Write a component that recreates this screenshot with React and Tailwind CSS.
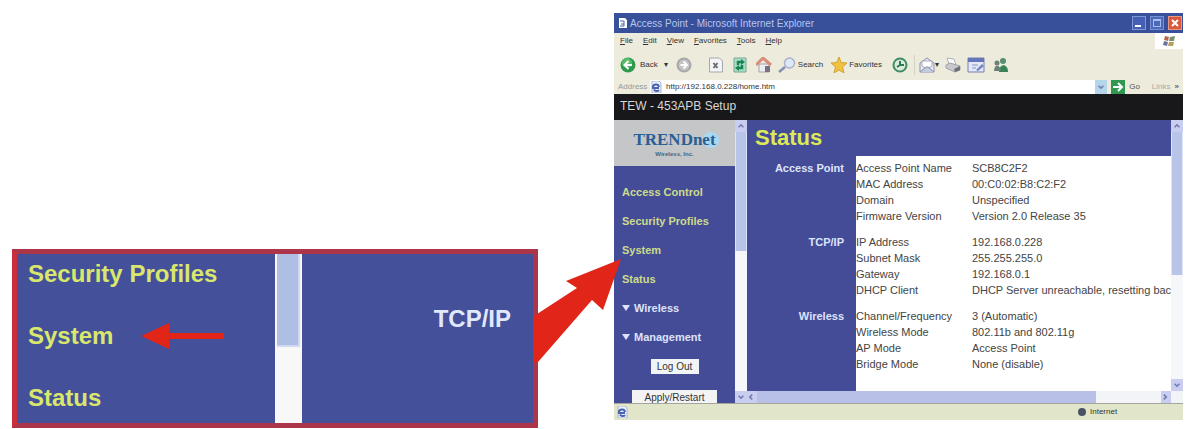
import React from "react";

const sidebarLinks = ["Access Control", "Security Profiles", "System", "Status"];

const statusGroups = [
  {
    title: "Access Point",
    rows: [
      ["Access Point Name", "SCB8C2F2"],
      ["MAC Address", "00:C0:02:B8:C2:F2"],
      ["Domain", "Unspecified"],
      ["Firmware Version", "Version 2.0 Release 35"],
    ],
  },
  {
    title: "TCP/IP",
    rows: [
      ["IP Address", "192.168.0.228"],
      ["Subnet Mask", "255.255.255.0"],
      ["Gateway", "192.168.0.1"],
      ["DHCP Client", "DHCP Server unreachable, resetting bac"],
    ],
  },
  {
    title: "Wireless",
    rows: [
      ["Channel/Frequency", "3 (Automatic)"],
      ["Wireless Mode", "802.11b and 802.11g"],
      ["AP Mode", "Access Point"],
      ["Bridge Mode", "None (disable)"],
    ],
  },
];

const Chevron = ({ className = "" }) => (
  <svg viewBox="0 0 10 10" className={`h-2 w-2 shrink-0 ${className}`} fill="none" stroke="#6f7bb0" strokeWidth="2">
    <path d="M2 6.5 5 3.5 8 6.5" />
  </svg>
);

const BackIcon = () => (
  <svg viewBox="0 0 16 16" className="h-4 w-4 shrink-0">
    <circle cx="8" cy="8" r="7.5" fill="#2f9a4c" />
    <circle cx="7" cy="6" r="5" fill="#59bb6c" />
    <path d="M8.5 4 4.5 8l4 4M5 8h7" fill="none" stroke="#fff" strokeWidth="2" />
  </svg>
);

const ForwardIcon = () => (
  <svg viewBox="0 0 16 16" className="h-4 w-4 shrink-0">
    <circle cx="8" cy="8" r="6.5" fill="#c4c4c4" stroke="#a8a8aa" strokeWidth="2" />
    <path d="M7.5 4.5 11 8l-3.5 3.5M11 8H4.5" fill="none" stroke="#fff" strokeWidth="2" />
  </svg>
);

const StopIcon = () => (
  <svg viewBox="0 0 16 16" className="h-4 w-4 shrink-0">
    <path d="M1.5 1h10l3 3v11h-13z" fill="#f4f4f6" stroke="#a5a8b0" />
    <path d="m5.500 6 4 5M9.500 6l-4 5" stroke="#6c6d76" strokeWidth="2" />
  </svg>
);

const RefreshIcon = () => (
  <svg viewBox="0 0 16 16" className="h-4 w-4 shrink-0">
    <path d="M2 1h12v14H2z" fill="#a9dcc4" stroke="#72a999" />
    <path d="M11 5H6v3M5 11h5V8" fill="none" stroke="#178653" strokeWidth="2.5" />
    <path d="m9 2 4 3-4 3zM7 8l-4 3 4 3z" fill="#178653" />
  </svg>
);

const HomeIcon = () => (
  <svg viewBox="0 0 16 16" className="h-4 w-4 shrink-0">
    <path d="M3 7h10v8H3z" fill="#eeeef2" stroke="#a59fa9" />
    <path d="M0 8 7 1l8 7" fill="none" stroke="#d98d7d" strokeWidth="3" />
    <path d="M9 9h5v6H9z" fill="#777180" />
  </svg>
);

const SearchIcon = () => (
  <svg viewBox="0 0 18 16" className="h-4 w-[18px] shrink-0">
    <circle cx="11.5" cy="6" r="5" fill="#dfe9f6" stroke="#aab2cb" strokeWidth="1.5" />
    <path d="m7 10-6 5" stroke="#8390b5" strokeWidth="2.5" />
  </svg>
);

const StarIcon = () => (
  <svg viewBox="0 0 16 16" className="h-4 w-4 shrink-0">
    <path d="m8 0 2.200 5.500L16 6l-4.500 4L13 16l-5-3-5 3 1.500-6L0 6l5.800-.5z" fill="#f0c23e" stroke="#d1a235" />
  </svg>
);

const HistoryIcon = () => (
  <svg viewBox="0 0 16 16" className="h-4 w-4 shrink-0">
    <circle cx="8" cy="8" r="6.5" fill="#d8ebdc" stroke="#418d63" strokeWidth="2" />
    <path d="M8 4v4h4M8 8l-3 2" fill="none" stroke="#2d7950" strokeWidth="2" />
  </svg>
);

const MailIcon = () => (
  <svg viewBox="0 0 16 16" className="h-4 w-4 shrink-0">
    <path d="m1 6 7-5 7 5v9H1z" fill="#e9eaf1" stroke="#8b91ad" />
    <path d="M3 4h10v5l-5 3-5-3z" fill="#fff" stroke="#a5a9bd" />
    <path d="m1 15 6-5h2l6 5" fill="#c4cae0" stroke="#8b91ad" />
  </svg>
);

const PrintIcon = () => (
  <svg viewBox="0 0 16 16" className="h-4 w-4 shrink-0">
    <path d="m2 1 7 1 2 6-7-1z" fill="#fafafa" stroke="#b1b1bb" />
    <path d="m1 8 4-2 10 3v4l-5 2-9-4z" fill="#c8c9ce" stroke="#a0a1a8" />
    <path d="m9 12 6-3v4l-5 2z" fill="#6c6f76" />
  </svg>
);

const EditIcon = () => (
  <svg viewBox="0 0 18 16" className="h-4 w-[18px] shrink-0">
    <path d="M1 1h16v14H1z" fill="#e4e8f7" stroke="#7581b1" />
    <path d="M1 1h16v4H1z" fill="#6476b9" />
    <path d="M5 8h6M5 11h4" stroke="#8995c0" />
    <path d="m9 13 6-6 2 2-6 5z" fill="#7488c5" />
  </svg>
);

const MessengerIcon = () => (
  <svg viewBox="0 0 16 16" className="h-4 w-4 shrink-0">
    <circle cx="10" cy="4" r="3" fill="#568f6b" />
    <path d="M6 15c0-9 9-9 9 0z" fill="#388257" />
    <circle cx="4" cy="6" r="2.5" fill="#6b8178" />
    <path d="M1 14c0-7 6-7 7 0z" fill="#6b8178" />
  </svg>
);

const ExplorerIcon = () => (
  <svg viewBox="0 0 12 12" className="h-3 w-3 shrink-0">
    <path d="M2 0h7l2 2v10H2z" fill="#edf1fb" stroke="#a9b4d4" />
    <path d="M9 7H3a3 3 0 1 1 6-1M4 8.5c1 2 4 2 5 .5" fill="none" stroke="#4864b0" strokeWidth="2" />
  </svg>
);

const TitleBar = () => (
  <header className="flex h-5 items-center bg-[#384f99] pr-px pl-1 text-[#b4c6f0]">
    <svg viewBox="0 0 10 12" className="mr-0.5 h-3 w-2.5 shrink-0">
      <path d="M1 1h6l2 2v8H1z" fill="#fff" />
      <path d="M2 4h4v3H3m3 0v2H2" fill="none" stroke="#4864b0" />
    </svg>
    <h1 className="grow text-[10px] whitespace-nowrap">Access Point - Microsoft Internet Explorer</h1>
    <button aria-label="Minimize" className="mr-1 flex h-3.5 w-3.5 items-end border border-[#8097d6] bg-[#4360b4] p-0.5">
      <span className="h-0.5 w-1.5 bg-white" />
    </button>
    <button aria-label="Maximize" className="mr-1 h-3.5 w-3.5 border border-[#7690d2] bg-[#4a69bb] p-0.5">
      <span className="block h-full border border-t-2 border-[#a9bcea]" />
    </button>
    <button aria-label="Close" className="h-3.5 w-3.5 border border-[#e59a83] bg-[#d9583c]">
      <svg viewBox="0 0 12 12" stroke="#fff" strokeWidth="2">
        <path d="m3 3 6 6M9 3 3 9" />
      </svg>
    </button>
  </header>
);

const MenuBar = () => (
  <nav className="flex h-4 items-stretch text-[8px] text-[#333]">
    <div className="flex grow items-center gap-2.5 pl-1.5">
      {["File", "Edit", "View", "Favorites", "Tools", "Help"].map((item) => (
        <button key={item} className="first-letter:underline">
          {item}
        </button>
      ))}
    </div>
    <div className="flex w-7 items-center justify-center bg-white">
      <svg viewBox="0 0 14 12" className="h-3 w-3.5">
        <path d="m3 1 4 1-1 4-4-1z" fill="#b8674f" />
        <path d="m8 2 5-1-1 5-5 0z" fill="#76906b" />
        <path d="m2 6 4 1-1 4-4-1z" fill="#68769f" />
        <path d="m7 7 5 0-1 4-5 0z" fill="#b69d58" />
      </svg>
    </div>
  </nav>
);

const ToolBar = () => (
  <div className="flex h-[31px] items-center overflow-hidden pl-1.5 text-[8px] text-[#333]">
    <button className="flex items-center gap-1"><BackIcon />Back</button>
    <span className="mr-2 ml-1.5">▾</span>
    <button aria-label="Forward" className="mr-4"><ForwardIcon /></button>
    <div className="flex gap-2">
      <button aria-label="Stop"><StopIcon /></button>
      <button aria-label="Refresh"><RefreshIcon /></button>
      <button aria-label="Home"><HomeIcon /></button>
    </div>
    <button className="ml-1.5 flex items-center gap-0.5"><SearchIcon />Search</button>
    <button className="ml-2 flex items-center gap-0.5"><StarIcon />Favorites</button>
    <button aria-label="History" className="ml-2.5"><HistoryIcon /></button>
    <span className="mr-1 ml-1.5 h-5 w-px bg-[#d2d1c3]" />
    <div className="flex items-center gap-1.5">
      <button aria-label="Mail" className="flex items-center"><MailIcon />▾</button>
      <button aria-label="Print"><PrintIcon /></button>
      <button aria-label="Edit"><EditIcon /></button>
      <button aria-label="Messenger" className="ml-0.5"><MessengerIcon /></button>
    </div>
  </div>
);

const AddressBar = () => (
  <div className="flex h-3.5 items-center text-[8px]">
    <label htmlFor="address" className="w-9 pl-1 text-[#999]">Address</label>
    <div className="flex h-full grow items-center gap-1 bg-white">
      <ExplorerIcon />
      <input id="address" defaultValue="http://192.168.0.228/home.htm" className="w-full min-w-0 text-[#333]" />
    </div>
    <button aria-label="Show addresses" className="flex h-full w-3 items-center justify-center bg-[#b5d5ea]">
      <Chevron className="rotate-180" />
    </button>
    <button className="ml-1 flex items-center gap-1 text-[#555]">
      <svg viewBox="0 0 14 14" className="h-3.5 w-3.5">
        <path d="M0 0h14v14H0z" fill="#2e9850" />
        <path d="M2 7h9M7 3l4 4-4 4" fill="none" stroke="#fff" strokeWidth="2" />
      </svg>
      Go
    </button>
    <button className="ml-3 text-[#aaa]">Links</button>
    <span className="mx-1 text-[#333]">»</span>
  </div>
);

const Sidebar = () => (
  <aside className="flex w-[121px] shrink-0 flex-col overflow-hidden bg-[#454c97] text-[11px] font-bold">
    <div className="h-[46px] shrink-0 bg-[#c5c6c8] pt-2.5 text-center">
      <div className="relative mx-auto w-fit">
        <svg viewBox="0 0 20 20" className="absolute top-0 -right-1 h-5 w-5">
          <circle cx="11" cy="10" r="8" fill="#a9d9f2" />
        </svg>
        <p className="relative font-['Liberation_Serif',serif] text-[17px] leading-5 text-[#286096]">TRENDnet</p>
      </div>
      <p className="text-[6px] leading-2 text-[#436487]">Wireless, Inc.</p>
    </div>
    <nav className="flex flex-col gap-[13px] pt-[18px] pl-2 leading-4">
      {sidebarLinks.map((link) => (
        <a key={link} href="#" className="text-[#cbdc8b]">{link}</a>
      ))}
      {["Wireless", "Management"].map((link) => (
        <a key={link} href="#" className="flex items-center gap-1 text-[#dde3fb]">
          <svg viewBox="0 0 8 6" className="h-1.5 w-2" fill="currentColor">
            <path d="M0 0h8L4 6z" />
          </svg>
          {link}
        </a>
      ))}
    </nav>
    <div className="flex flex-col items-center gap-4 pt-3.5 font-normal text-[#333]">
      <button className="h-[15px] w-12 bg-[#f1f5f8] text-[10px] leading-[15px]">Log Out</button>
      <button className="h-[15px] w-[85px] bg-[#f4f4f4] text-[10px] leading-[15px]">Apply/Restart</button>
    </div>
  </aside>
);

// vertical scrollbar, the thumb is a share of the track
const ScrollBar = ({ thumb }) => (
  <div className="flex w-3 shrink-0 flex-col items-center bg-[#f6f7fa]">
    <div className="flex h-3 w-full items-center justify-center bg-[#c9cdf0]"><Chevron /></div>
    <div className="w-full grow">
      <div className={`border-x border-[#dfe4f8] bg-[#b9c5e8] ${thumb}`} />
    </div>
    <div className="flex h-3 w-full items-center justify-center bg-[#c9cdf0]"><Chevron className="rotate-180" /></div>
  </div>
);

const StatusTable = () => (
  <table className="w-full table-fixed border-collapse text-[11px] leading-4 text-[#444]">
    <colgroup>
      <col className="w-[109px]" />
      <col className="w-[116px]" />
      <col />
    </colgroup>
    {statusGroups.map((group) => (
      <tbody key={group.title}>
        {group.rows.map(([name, value], i) => (
          <tr key={name}>
            {i === 0 && (
              <th rowSpan={4} scope="rowgroup" className="bg-[#454c97] pt-1 pr-3 text-right align-top text-[#dde3fb]">
                {group.title}
              </th>
            )}
            <td className={`whitespace-nowrap ${i === 0 ? "pt-1" : ""} ${i === 3 ? "pb-1.5" : ""}`}>{name}</td>
            <td className={`whitespace-nowrap ${i === 0 ? "pt-1" : ""} ${i === 3 ? "pb-1.5" : ""}`}>{value}</td>
          </tr>
        ))}
      </tbody>
    ))}
  </table>
);

const StatusPane = () => (
  <main className="flex min-w-0 grow flex-col">
    <div className="flex grow">
      <section className="flex min-w-0 grow flex-col overflow-hidden bg-[linear-gradient(90deg,#454c97_109px,white_109px)]">
        <h2 className="h-9 bg-[#454c97] pl-2 text-[22px] leading-9 font-bold text-[#dce958]">Status</h2>
        <StatusTable />
      </section>
      <ScrollBar thumb="h-[58%]" />
    </div>
    <div className="flex h-3 bg-[#f3f4f8] pr-3">
      <div className="flex w-2.5 items-center bg-[#c9cdf0]"><Chevron className="-rotate-90" /></div>
      <div className="grow">
        <div className="h-full w-[84%] bg-[#b9c0e7]" />
      </div>
      <div className="flex w-2.5 items-center bg-[#c9cdf0]"><Chevron className="rotate-90" /></div>
    </div>
  </main>
);

const BrowserWindow = () => (
  <div className="w-full min-w-0 bg-[#ecebdc]">
    <TitleBar />
    <MenuBar />
    <ToolBar />
    <AddressBar />
    <p className="h-[26px] bg-[#181719] pl-1.5 text-xs leading-6 text-[#d8d8d8]">TEW - 453APB Setup</p>
    <div className="flex h-[283px]">
      <Sidebar />
      <ScrollBar thumb="h-[46%]" />
      <StatusPane />
    </div>
    <footer className="flex h-[17px] items-center border-t border-[#a5a69b] bg-[#e1e5c9] text-[8px] text-[#333]">
      <span className="grow pl-0.5"><ExplorerIcon /></span>
      <span className="flex w-[105px] items-center gap-1">
        <span className="h-2 w-2 rounded-full bg-[#4a5264]" />
        Internet
      </span>
    </footer>
  </div>
);

const ZoomPanel = () => (
  <section className="flex h-[179px] w-full overflow-hidden border-[5px] border-[#ad3549] border-l-[#cb2e3b] bg-[#44509a] text-2xl font-bold">
    <nav className="flex w-[50%] shrink-0 flex-col gap-[30px] pt-1 pl-[11px] leading-8 text-[#d9e76c]">
      <a href="#">Security Profiles</a>
      <a href="#" className="flex items-center gap-7">
        System
        <svg viewBox="0 0 84 26" className="h-[26px] w-[84px]" fill="#e12619">
          <path d="M0 13 28 0v10h55v6H28v10z" />
        </svg>
      </a>
      <a href="#">Status</a>
    </nav>
    <div className="w-[27px] shrink-0 bg-[#f7f8f7] px-0.5">
      <div className="h-[55%] border-r-2 border-b-2 border-[#cfdaf2] bg-[#aebfe3]" />
    </div>
    <p className="grow pt-[49px] pr-[22px] text-right leading-8 text-[#e0e8fb]">TCP/IP</p>
  </section>
);

const App = () => (
  <div className="flex items-end bg-white pt-[13px] pr-1 pl-3 font-['Liberation_Sans',Arial,sans-serif]">
    <div className="min-w-0 flex-[526]">
      <ZoomPanel />
    </div>
    <div className="relative w-[76px] shrink-0 self-stretch">
      {/* arrow from the enlarged area to the menu entry */}
      <svg viewBox="0 0 88 104" className="absolute bottom-[65px] -left-1 z-10 h-[104px] w-[88px]" fill="#e12619">
        <path d="M0 57 43 29 32 22 87 0 69 51 58 41 4 103 0 104z" />
      </svg>
    </div>
    <div className="min-w-0 flex-[569] pb-2">
      <BrowserWindow />
    </div>
  </div>
);

export default App;
